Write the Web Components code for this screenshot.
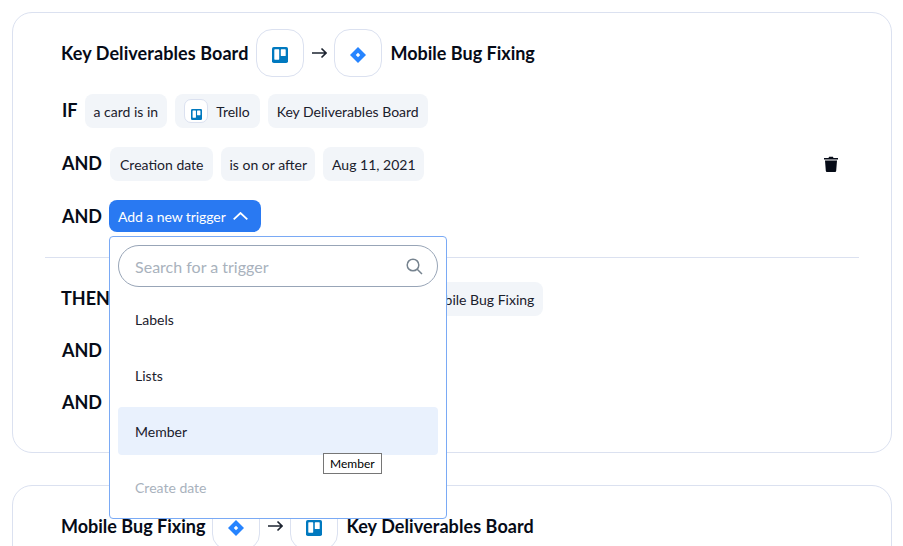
<!DOCTYPE html>
<html>
<head>
<meta charset="utf-8">
<title>Flows</title>
<style>
    html,body{
        margin:0;
        height:546px;
        overflow:hidden;
        background:#fff;
    }
    body{
        padding:12px 12px 0;
        box-sizing:border-box;
        font-family:Lato,"Liberation Sans",sans-serif;
        color:#060b17;
    }
</style>
</head>
<body>
<flow-card>
    <flow-title style="--to-gap:8px">
        <span slot="from" style="letter-spacing:.08px">Key Deliverables Board</span>
        <app-icon slot="from-icon" name="trello"></app-icon>
        <app-icon slot="to-icon" name="jira"></app-icon>
        <span slot="to">Mobile Bug Fixing</span>
    </flow-title>
    <rule-row label="IF" style="--top:17px;--label-right:-1px">
        <rule-chip>a card is in</rule-chip>
        <rule-chip style="padding-right:10px"><app-icon name="trello" small></app-icon>Trello</rule-chip>
        <rule-chip>Key Deliverables Board</rule-chip>
    </rule-row>
    <rule-row label="AND" style="--top:19px;--label-top:-3px">
        <rule-chip style="padding:0 10px">Creation date</rule-chip>
        <rule-chip style="padding:0 8px">is on or after</rule-chip>
        <rule-chip style="padding:0 8px 0 9px">Aug 11, 2021</rule-chip>
        <trash-button slot="end"></trash-button>
    </rule-row>
    <rule-row label="AND" style="--top:19px;--height:32px;--label-top:0px;--label-right:-1px">
        <trigger-button></trigger-button>
    </rule-row>
    <hr-line></hr-line>
    <rule-row label="THEN" style="--top:0px;--label-left:-1px">
        <rule-chip style="margin-left:297px">Mobile Bug Fixing</rule-chip>
    </rule-row>
    <rule-row label="AND" style="--top:17px;--label-top:0px"></rule-row>
    <rule-row label="AND" style="--top:18px;--label-top:0px"></rule-row>
</flow-card>
<flow-card style="margin-top:32px">
    <flow-title style="--from-gap:7px;--to-gap:8px">
        <span slot="from">Mobile Bug Fixing</span>
        <app-icon slot="from-icon" name="jira"></app-icon>
        <app-icon slot="to-icon" name="trello"></app-icon>
        <span slot="to" style="letter-spacing:.08px">Key Deliverables Board</span>
    </flow-title>
</flow-card>

<script>
class FlowCard extends HTMLElement{
    constructor(){
        super()
        this.attachShadow({mode:'open'})
        this.shadowRoot.innerHTML = `
            <style>
                :host{
                    display:block;
                    box-sizing:border-box;
                    width:880px;
                    border:1px solid #dbe1f0;
                    border-radius:20px;
                    padding:16px 32px 33px 32px;
                }
            </style>
            <slot></slot>
        `
    }
}
customElements.define('flow-card',FlowCard)

class FlowTitle extends HTMLElement{
    constructor(){
        super()
        this.attachShadow({mode:'open'})
        this.shadowRoot.innerHTML = `
            <style>
                :host{
                    display:flex;
                    align-items:center;
                    height:48px;
                    padding-left:16px;
                    font-size:18px;
                    font-weight:700;
                    color:#060b17;
                }
                .arrow{
                    display:block;
                    margin:0 7px 0 8px;
                }
                .from,.to{margin-top:-1px}
                .from{margin-right:var(--from-gap,8px)}
                .to{margin-left:var(--to-gap,9px)}
            </style>
            <span class="from"><slot name="from"></slot></span>
            <slot name="from-icon"></slot>
            <svg class="arrow" width="15" height="12" viewBox="0 0 15 12" fill="none" stroke="#1d2430" stroke-width="1.600">
                <path d="M0 6h14M9.500 1.500 14 6l-4.500 4.500"/>
            </svg>
            <slot name="to-icon"></slot>
            <span class="to"><slot name="to"></slot></span>
        `
    }
}
customElements.define('flow-title',FlowTitle)

const icons = {
    trello:`<svg viewBox="0 0 16 16" width="100%" height="100%">
        <rect width="16" height="16" rx="1.800" fill="#0079bf"/>
        <rect x="2.300" y="2.300" width="4.900" height="10.400" rx=".6" fill="#fff"/>
        <rect x="8.800" y="2.300" width="4.900" height="6.800" rx=".6" fill="#fff"/>
    </svg>`,
    jira:`<svg viewBox="0 0 16 16" width="100%" height="100%">
        <path d="M8 0 16 8 8 16 0 8Z" fill="#2684ff"/>
        <path d="M8 5.800 10.200 8 8 10.200 5.800 8Z" fill="#fff"/>
    </svg>`
}

class AppIcon extends HTMLElement{
    constructor(){
        super()
        this.attachShadow({mode:'open'})
        this.shadowRoot.innerHTML = `
            <style>
                :host{
                    display:flex;
                    align-items:center;
                    justify-content:center;
                    box-sizing:border-box;
                    flex:none;
                    width:48px;
                    height:48px;
                    background:#fff;
                    border:1px solid #dbe1f0;
                    border-radius:16px;
                }
                :host([small]){
                    width:24px;
                    height:24px;
                    border-radius:7px;
                    margin-right:8px;
                }
                div{width:16px;height:16px}
                :host([small]) div{width:11px;height:11px}
            </style>
            <div>${icons[this.getAttribute('name')]}</div>
        `
    }
}
customElements.define('app-icon',AppIcon)

class RuleRow extends HTMLElement{
    constructor(){
        super()
        this.attachShadow({mode:'open'})
        this.shadowRoot.innerHTML = `
            <style>
                :host{
                    display:flex;
                    align-items:center;
                    gap:8px;
                    height:var(--height,34px);
                    margin-top:var(--top,18px);
                    padding:0 21px 0 17px;
                }
                .label{
                    font-size:18px;
                    font-weight:700;
                    color:#060b17;
                    margin-top:var(--label-top,-2px);
                    margin-left:var(--label-left,0);
                    margin-right:var(--label-right,0);
                }
                .end{
                    margin-left:auto;
                    display:flex;
                }
            </style>
            <span class="label">${this.getAttribute('label')}</span>
            <slot></slot>
            <span class="end"><slot name="end"></slot></span>
        `
    }
}
customElements.define('rule-row',RuleRow)

class RuleChip extends HTMLElement{
    constructor(){
        super()
        this.attachShadow({mode:'open'})
        this.shadowRoot.innerHTML = `
            <style>
                :host{
                    display:inline-flex;
                    align-items:center;
                    box-sizing:border-box;
                    height:34px;
                    padding:0 9px;
                    background:#f2f5f9;
                    border-radius:8px;
                    font-size:14px;
                    color:#1a202c;
                    white-space:nowrap;
                }
            </style>
            <slot></slot>
        `
    }
}
customElements.define('rule-chip',RuleChip)

class TrashButton extends HTMLElement{
    constructor(){
        super()
        this.attachShadow({mode:'open'})
        this.shadowRoot.innerHTML = `
            <style>
                :host{display:block;width:14px;height:16px}
                svg{display:block}
            </style>
            <svg width="14" height="16" viewBox="0 0 14 16" fill="#060b17">
                <path d="M0 2h4.500l.6-1.200h3.800L9.500 2H14v1.600H0Z"/>
                <path d="M1 4.600h12l-.8 10.200a1.200 1.200 0 0 1-1.200 1.200H3a1.200 1.200 0 0 1-1.200-1.200Z"/>
            </svg>
        `
    }
}
customElements.define('trash-button',TrashButton)

class HrLine extends HTMLElement{
    constructor(){
        super()
        this.attachShadow({mode:'open'})
        this.shadowRoot.innerHTML = `
            <style>
                :host{
                    display:block;
                    height:1px;
                    background:#dbe1f0;
                    margin:25px 0 24px;
                }
            </style>
        `
    }
}
customElements.define('hr-line',HrLine)

class TriggerButton extends HTMLElement{
    constructor(){
        super()
        this.attachShadow({mode:'open'})
        this.shadowRoot.innerHTML = `
            <style>
                :host{
                    display:block;
                    position:relative;
                }
                button{
                    display:flex;
                    align-items:center;
                    gap:7px;
                    box-sizing:border-box;
                    width:152px;
                    height:32px;
                    padding:0 0 0 9px;
                    border:0;
                    border-radius:8px;
                    background:#2979f2;
                    color:#fff;
                    font:14px Lato,"Liberation Sans",sans-serif;
                    letter-spacing:-.08px;
                }
                trigger-menu{
                    position:absolute;
                    left:0;
                    top:36px;
                    z-index:5;
                    letter-spacing:0;
                }
            </style>
            <button>Add a new trigger
                <svg width="15" height="8" viewBox="0 0 15 8" fill="none" stroke="#fff" stroke-width="1.800">
                    <path d="M.7 7.300 7.500 1l6.800 6.300"/>
                </svg>
            </button>
            <trigger-menu></trigger-menu>
        `
    }
}
customElements.define('trigger-button',TriggerButton)

class TriggerMenu extends HTMLElement{
    constructor(){
        super()
        this.attachShadow({mode:'open'})
        this.shadowRoot.innerHTML = `
            <style>
                :host{
                    display:block;
                    box-sizing:border-box;
                    width:338px;
                    height:283px;
                    padding:8px;
                    background:#fff;
                    border:1px solid #7aaaf5;
                    border-radius:4px;
                    font-size:14px;
                    color:#1a202c;
                }
                .search{
                    display:flex;
                    align-items:center;
                    justify-content:space-between;
                    box-sizing:border-box;
                    height:42px;
                    padding:0 14px 0 16px;
                    border:1px solid #98a5b7;
                    border-radius:21px;
                    font-size:16px;
                    color:#a9b2bd;
                }
                svg{display:block}
                .list{
                    display:grid;
                    grid-auto-rows:48px;
                    gap:8px;
                    margin-top:8px;
                }
                .item{
                    display:flex;
                    align-items:center;
                    padding:0 17px;
                    border-radius:4px;
                }
                .on{background:#e9f1fd}
                .off{color:#a9b2bd}
                .tip{
                    position:absolute;
                    left:213px;
                    top:216px;
                    padding:0 6px;
                    width:59px;
                    height:21px;
                    line-height:20px;
                    box-sizing:border-box;
                    background:#fff;
                    border:1px solid #767676;
                    font-size:12px;
                    color:#000;
                }
            </style>
            <div class="search">
                <span>Search for a trigger</span>
                <svg width="17" height="17" viewBox="0 0 17 17" fill="none" stroke="#76838f" stroke-width="1.500">
                    <circle cx="7" cy="7" r="5.800"/>
                    <path d="M11.200 11.200 16 16"/>
                </svg>
            </div>
            <div class="list">
                <div class="item">Labels</div>
                <div class="item">Lists</div>
                <div class="item on">Member</div>
                <div class="item off">Create date</div>
            </div>
            <div class="tip">Member</div>
        `
    }
}
customElements.define('trigger-menu',TriggerMenu)
</script>
</body>
</html>
